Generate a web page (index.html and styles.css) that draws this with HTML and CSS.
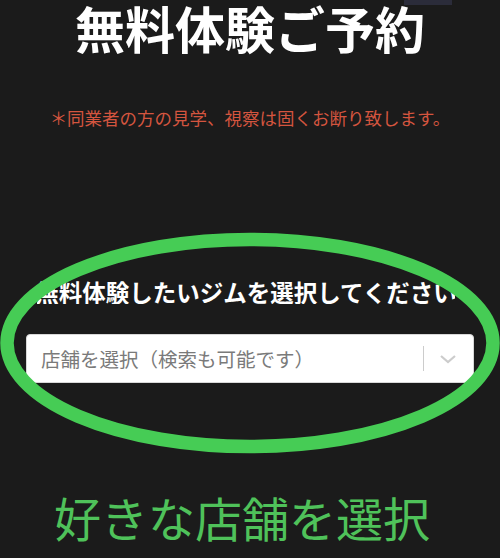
FILE: index.html
```html
<!DOCTYPE html>
<html lang="ja">
<head>
<meta charset="utf-8">
<link rel="stylesheet" href="styles.css">
</head>
<body>
<div class="page">
  <div class="topbar"></div>
  <h1 class="title">無料体験ご予約</h1>
  <p class="notice">＊同業者の方の見学、視察は固くお断り致します。</p>
  <div class="label-wrap"><span class="label">無料体験したいジムを選択してください</span></div>
  <div class="select">
    <span class="placeholder">店舗を選択（検索も可能です）</span>
    <span class="sep"></span>
    <svg class="chev" width="18" height="10" viewBox="0 0 18 10"><polyline points="2,2 9,8 16,2" fill="none" stroke="#cccccc" stroke-width="2.2"/></svg>
  </div>
  <p class="cta">好きな店舗を選択</p>
  <svg class="ring" width="500" height="240" viewBox="0 0 500 240"><ellipse cx="250" cy="113" rx="243" ry="103.5" fill="none" stroke="#46cc55" stroke-width="13.5"/></svg>
</div>
</body>
</html>
```
FILE: styles.css
```css
html, body {
  margin: 0;
  padding: 0;
  background: #1b1b1b;
}
body {
  font-family: "Noto Sans CJK JP", "Noto Sans", sans-serif;
}
.page {
  position: relative;
  width: 500px;
  height: 558px;
  overflow: hidden;
}
.topbar {
  position: absolute;
  left: 404px;
  top: 0;
  width: 48px;
  height: 5px;
  background: #2b2c3a;
}
.title {
  margin: 0;
  padding-top: 2px;
  font-size: 50px;
  line-height: 1;
  font-weight: 700;
  color: #ffffff;
  text-align: center;
}
.notice {
  margin: 57px 0 0;
  font-size: 17.5px;
  line-height: 1;
  color: #d4553f;
  text-align: center;
}
.label-wrap {
  margin: 154px 0 0 37px;
  width: 418px;
  display: flex;
  justify-content: center;
  overflow: hidden;
}
.label {
  flex: none;
  white-space: nowrap;
  font-size: 23.5px;
  line-height: 1;
  font-weight: 700;
  color: #ffffff;
}
.select {
  margin: 30px 0 0 26px;
  width: 448px;
  height: 49px;
  box-sizing: border-box;
  background: #ffffff;
  border: 1px solid #d8d8d8;
  border-radius: 4px;
  display: flex;
  align-items: center;
  padding-left: 14px;
}
.placeholder {
  flex: 1;
  font-size: 19.5px;
  color: #7a7a7a;
  white-space: nowrap;
}
.sep {
  width: 1px;
  height: 25px;
  background: #cccccc;
}
.chev {
  margin: 0 16px 0 15px;
}
.cta {
  margin: 110px 0 0;
  padding-right: 16px;
  font-size: 47px;
  line-height: 1;
  color: #4fc25a;
  text-align: center;
}
.ring {
  position: absolute;
  left: 0;
  top: 230px;
}
```
